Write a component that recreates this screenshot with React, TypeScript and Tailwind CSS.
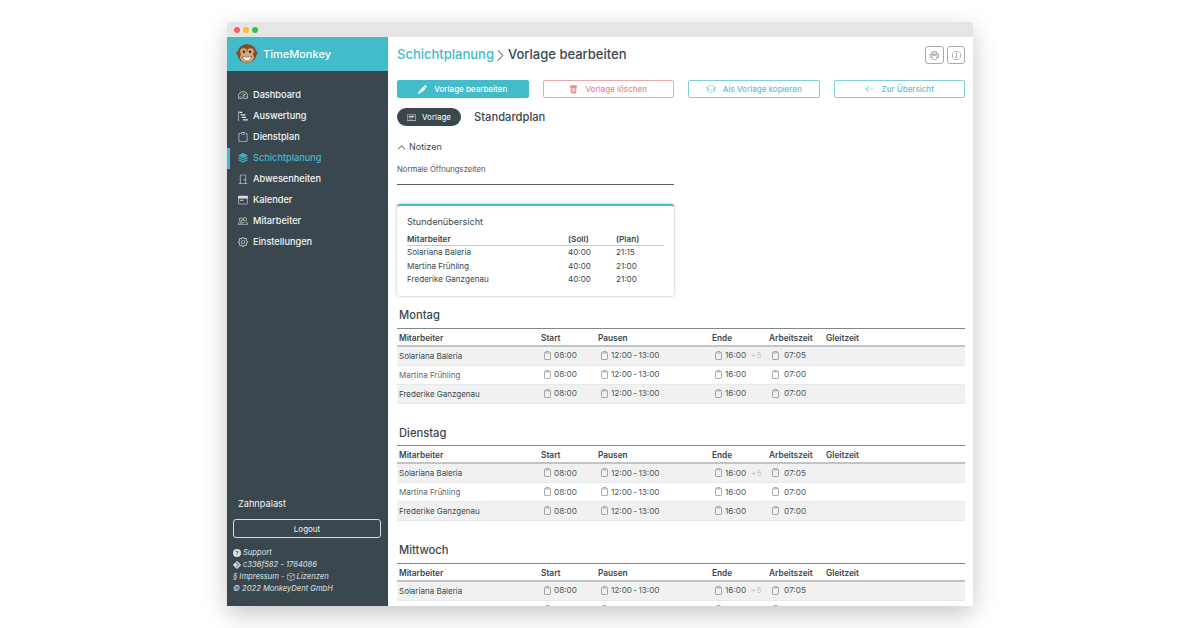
import React from "react";
import {
  BsArrowLeft,
  BsBarChartSteps,
  BsBox,
  BsCardHeading,
  BsChevronRight,
  BsChevronUp,
  BsClipboard,
  BsDoorClosed,
  BsGear,
  BsGit,
  BsInfoCircle,
  BsLayers,
  BsPencilFill,
  BsPeople,
  BsPrinter,
  BsQuestionCircleFill,
  BsSpeedometer2,
  BsStack,
  BsTrashFill,
} from "react-icons/bs";

const CalendarIcon = ({ className }: { className?: string }) => (
  <svg viewBox="0 0 16 16" className={className} fill="none" stroke="currentColor">
    <rect x="1" y="2" width="14" height="12.5" rx="1" />
    <rect x="1" y="2" width="14" height="3" fill="currentColor" />
    <path d="M3.5 8.5h5" strokeWidth="1.5" />
  </svg>
);

// narrow clipboard used in the time cells
const ClipIcon = ({ className }: { className?: string }) => (
  <svg viewBox="0 0 7 9" className={className} fill="none" stroke="currentColor" strokeWidth=".7">
    <rect x=".5" y="1.300" width="6" height="7.200" rx=".8" />
    <rect x="2" y=".5" width="3" height="1.500" rx=".4" fill="#fff" />
  </svg>
);

const Monkey = () => (
  <svg viewBox="0 0 24 24" className="w-[22px] h-[22px]">
    <circle cx="2.6" cy="11" r="2.4" fill="#8a5a3a" />
    <circle cx="21.4" cy="11" r="2.4" fill="#8a5a3a" />
    <circle cx="12" cy="11.5" r="10.5" fill="#7d4f30" />
    <ellipse cx="8.2" cy="9.5" rx="3.6" ry="3.8" fill="#d9a878" />
    <ellipse cx="15.8" cy="9.5" rx="3.6" ry="3.8" fill="#d9a878" />
    <ellipse cx="12" cy="15.5" rx="7.5" ry="5.8" fill="#d9a878" />
    <circle cx="8.6" cy="9.6" r="1.3" fill="#2b2018" />
    <circle cx="15.4" cy="9.6" r="1.3" fill="#2b2018" />
    <path d="M7 14.5c3 1.2 7 1.2 10 0-.5 3.6-2.6 5-5 5s-4.500-1.400-5-5z" fill="#fff" stroke="#5a3722" strokeWidth=".6" />
  </svg>
);

const navItems = [
  { icon: BsSpeedometer2, label: "Dashboard" },
  { icon: BsBarChartSteps, label: "Auswertung" },
  { icon: BsClipboard, label: "Dienstplan" },
  { icon: BsStack, label: "Schichtplanung", active: true },
  { icon: BsDoorClosed, label: "Abwesenheiten" },
  { icon: CalendarIcon, label: "Kalender" },
  { icon: BsPeople, label: "Mitarbeiter" },
  { icon: BsGear, label: "Einstellungen" },
];

const Sidebar = () => (
  <aside className="w-[161px] shrink-0 bg-[#3a474f] flex flex-col text-white">
    <div className="h-[34px] shrink-0 bg-[#42bbcb] flex items-center pl-[9px] gap-[5px]">
      <Monkey />
      <span className="text-[11px] font-medium">TimeMonkey</span>
    </div>
    <nav className="mt-[13.500px] flex flex-col">
      {navItems.map((item) => (
        <a
          key={item.label}
          href="#"
          className={`h-[21px] flex items-center gap-[5px] pl-[8px] border-l-[3px] text-[9.200px] font-medium ${
            item.active ? "border-[#42bbcb] text-[#42bbcb]" : "border-transparent text-[#f4f6f7]"
          }`}
        >
          <item.icon className="w-[10px] h-[10px] opacity-90" />
          {item.label}
        </a>
      ))}
    </nav>
    <div className="mt-auto pl-[6px] pr-[7px] pb-[11px]">
      <div className="pl-[5px] text-[9.200px] text-[#f4f6f7] leading-[12px]">Zahnpalast</div>
      <button className="mt-[9px] w-full h-[19px] rounded-[3px] border border-[#d5dadc] text-[8px] text-[#f4f6f7]">
        Logout
      </button>
      <div className="mt-[9px] text-[7.600px] italic leading-[12px] text-[#dfe3e5]">
        <div className="flex items-center gap-[2px]">
          <BsQuestionCircleFill className="w-[8px] h-[8px]" /> Support
        </div>
        <div className="flex items-center gap-[2px]">
          <BsGit className="w-[8px] h-[8px]" /> c336f582 - 1784086
        </div>
        <div className="flex items-center gap-[2px]">
          § Impressum - <BsBox className="w-[8px] h-[8px]" /> Lizenzen
        </div>
        <div>© 2022 MonkeyDent GmbH</div>
      </div>
    </div>
  </aside>
);

const buttonBase =
  "h-[18px] rounded-[2px] flex items-center justify-center gap-[7px] text-[8px] font-medium border";

const Actions = () => (
  <div className="mt-[16px] grid grid-cols-4 gap-x-[14px]">
    <button className={`${buttonBase} bg-[#42bbcb] border-[#42bbcb] text-white`}>
      <BsPencilFill className="w-[9px] h-[9px]" /> Vorlage bearbeiten
    </button>
    <button className={`${buttonBase} border-[#eba9a9] text-[#e58a8a]`}>
      <BsTrashFill className="w-[9px] h-[9px]" /> Vorlage löschen
    </button>
    <button className={`${buttonBase} border-[#7fd0db] text-[#5cc3d1]`}>
      <BsLayers className="w-[10px] h-[10px]" /> Als Vorlage kopieren
    </button>
    <button className={`${buttonBase} border-[#7fd0db] text-[#5cc3d1]`}>
      <BsArrowLeft className="w-[10px] h-[10px]" /> Zur Übersicht
    </button>
  </div>
);

const summary = [
  ["Solariana Baleria", "40:00", "21:15"],
  ["Martina Frühling", "40:00", "21:00"],
  ["Frederike Ganzgenau", "40:00", "21:00"],
];

const SummaryCard = () => (
  <div className="mt-[18.500px] w-[277px] h-[92px] rounded-[3px] border-t-2 border-[#42bbcb] shadow-[0_0_3px_rgba(0,0,0,0.3)] px-[10px] pt-[10px] text-[#3a474f]">
    <div className="text-[9.100px] leading-[12px]">Stundenübersicht</div>
    <div className="mt-[6px] w-[257px] h-[12px] border-b border-[#c5c9cb] flex items-center text-[8.200px] font-semibold">
      <span className="w-[161px]">Mitarbeiter</span>
      <span className="w-[48px]">(Soll)</span>
      <span>(Plan)</span>
    </div>
    {summary.map((row) => (
      <div key={row[0]} className="h-[13.500px] flex items-center text-[8.100px]">
        <span className="w-[161px]">{row[0]}</span>
        <span className="w-[48px]">{row[1]}</span>
        <span>{row[2]}</span>
      </div>
    ))}
  </div>
);

const Time = ({ value, extra, wide }: { value: string; extra?: string; wide?: boolean }) => (
  <span className="flex items-center pl-[3px] text-[#4a565d] text-[8.200px] [word-spacing:-1px]">
    <ClipIcon className={`w-[7px] h-[9px] text-[#7b858a] ${wide ? "mr-[5px]" : "mr-[3px]"}`} />
    {value}
    {extra && <span className="ml-[5px] text-[#c3c7c9]">{extra}</span>}
  </span>
);

const rows = [
  { name: "Solariana Baleria", work: "07:05", extra: "+5" },
  { name: "Martina Frühling", work: "07:00" },
  { name: "Frederike Ganzgenau", work: "07:00" },
];

const gridCols = "grid grid-cols-[144px_57px_114px_57px_57px_57px_1fr] items-center";

const DayTable = ({ day, first }: { day: string; first?: boolean }) => (
  <section className={first ? "mt-[9.500px]" : "mt-[19px]"}>
    <h2 className="pl-[2px] h-[17px] text-[11.200px] leading-[20px] font-medium text-[#3a474f]">{day}</h2>
    <div className="mt-[5.500px] border-t border-[#7e888d]">
      <div className={`${gridCols} h-[18px] pt-[2.500px] border-b-2 border-[#c0c4c6] text-[8.300px] font-semibold text-[#3a474f]`}>
        <span className="pl-[2px]">Mitarbeiter</span>
        <span>Start</span>
        <span>Pausen</span>
        <span>Ende</span>
        <span>Arbeitszeit</span>
        <span>Gleitzeit</span>
      </div>
      {rows.map((row, i) => (
        <div
          key={row.name}
          className={`${gridCols} h-[19px] border-b border-[#e7e8e9] text-[8px] ${
            i % 2 === 0 ? "bg-[#f1f1f1]" : "bg-white"
          }`}
        >
          <span className={`pl-[2px] ${i % 2 === 0 ? "text-[#3a474f]" : "text-[#5b666c]"}`}>{row.name}</span>
          <Time value="08:00" />
          <Time value="12:00 - 13:00" />
          <Time value="16:00" extra={row.extra} />
          <Time value={row.work} wide />
          <span />
        </div>
      ))}
    </div>
  </section>
);

const Main = () => (
  <main className="flex-1 min-w-0 overflow-hidden pl-[9px] pr-[8px] pt-[9px]">
    <div className="flex items-center justify-between h-[18px]">
      <h1 className="flex items-center text-[13px] font-medium text-[#3a474f]">
        <span className="text-[#42bbcb]">Schichtplanung</span>
        <BsChevronRight className="w-[13px] h-[13px] mx-[0.500px] text-[#5b666c]" />
        <span>Vorlage bearbeiten</span>
      </h1>
      <div className="flex gap-[3px]">
        <button className="w-[19px] h-[18px] rounded-[3px] border border-[#a5abae] flex items-center justify-center text-[#6c767b]">
          <BsPrinter className="w-[9px] h-[9px]" />
        </button>
        <button className="w-[18px] h-[18px] rounded-[3px] border border-[#a5abae] flex items-center justify-center text-[#6c767b]">
          <BsInfoCircle className="w-[9px] h-[9px]" />
        </button>
      </div>
    </div>
    <Actions />
    <div className="mt-[10px] flex items-center">
      <span className="h-[18px] w-[64px] rounded-full bg-[#3a474f] text-white text-[8px] flex items-center justify-center gap-[6px]">
        <BsCardHeading className="w-[9px] h-[9px] text-[#c9cfd2]" /> Vorlage
      </span>
      <span className="ml-[13px] text-[11.200px] font-medium text-[#3a474f]">Standardplan</span>
    </div>
    <div className="mt-[15px] flex items-center gap-[3px] text-[9px] h-[12px] text-[#3a474f]">
      <BsChevronUp className="w-[9px] h-[9px]" /> Notizen
    </div>
    <div className="mt-[11px] w-[277px] h-[21px] border-b border-[#5b5f62] text-[7.700px] leading-[11px] text-[#4a565d]">
      Normale Öffnungszeiten
    </div>
    <SummaryCard />
    <DayTable day="Montag" first />
    <DayTable day="Dienstag" />
    <DayTable day="Mittwoch" />
  </main>
);

export default function App() {
  return (
    <div
      className="w-[1200px] h-[628px] bg-white overflow-hidden pt-[22px] pl-[227px]"
      style={{ fontFamily: "Inter, 'Liberation Sans', sans-serif" }}
    >
      <div className="w-[746px] h-[584px] rounded-t-[4px] flex flex-col bg-white shadow-[0_8px_24px_rgba(0,0,0,0.22)] overflow-hidden">
        <div className="h-[15px] shrink-0 bg-[#e5e5e5] flex items-center gap-[3px] pl-[7px]">
          <span className="w-[6px] h-[6px] rounded-full bg-[#ff5f57]" />
          <span className="w-[6px] h-[6px] rounded-full bg-[#febc2e]" />
          <span className="w-[6px] h-[6px] rounded-full bg-[#28c840]" />
        </div>
        <div className="flex flex-1 min-h-0">
          <Sidebar />
          <Main />
        </div>
      </div>
    </div>
  );
}
